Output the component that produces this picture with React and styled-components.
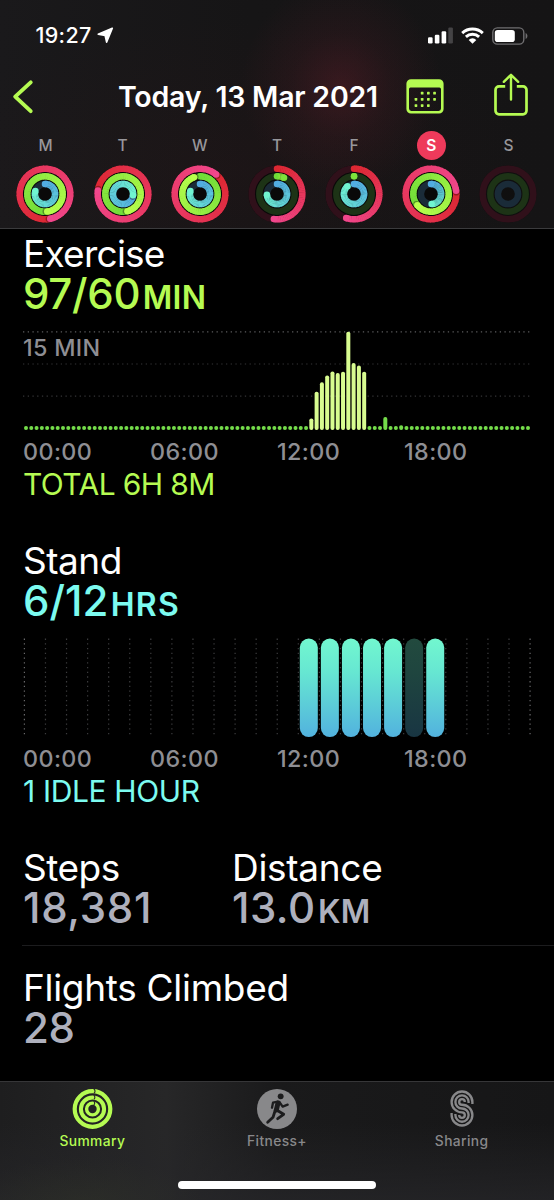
import React from 'react';
import styled, { createGlobalStyle } from 'styled-components';

const GREEN = '#b5fb52';
const CYAN = '#7cfbf0';
const GREY = '#8e8e93';

const GlobalStyle = createGlobalStyle`
  * { box-sizing: border-box; }
  body {
    margin: 0;
    background: #000;
    font-family: Inter, "Liberation Sans", sans-serif;
    color: #fff;
  }
`;

const Screen = styled.div`
  width: 554px;
  height: 1200px;
  display: flex;
  flex-direction: column;
  overflow: hidden;
  background: #000;
`;

const Header = styled.header`
  flex: none;
  height: 229px;
  border-bottom: 1px solid #3b3b3d;
  background:
    radial-gradient(ellipse 100px 105px at 341px 86px, rgba(96, 30, 42, 0.45), rgba(96, 30, 42, 0.17) 50%, transparent),
    radial-gradient(ellipse 300px 150px at 230px 170px, rgba(60, 22, 26, 0.16), transparent),
    linear-gradient(90deg, #1a191b, #161516 45%, #151415);
`;

const StatusBar = styled.div`
  height: 71px;
  padding: 0 26px 0 35.5px;
  display: flex;
  align-items: center;
  svg { flex: none; }
`;

const Clock = styled.span`
  width: 61.5px;
  font-size: 21.5px;
  line-height: 26px;
  margin-top: -1px;
  font-weight: 500;
  letter-spacing: 0.3px;
`;

const StatusIcons = styled.div`
  margin-left: auto;
  display: flex;
  align-items: center;
  gap: 8px;
`;

const NavBar = styled.div`
  height: 51px;
  padding: 0 26px 0 12px;
  display: flex;
  align-items: center;
  svg { flex: none; }
`;

const Title = styled.h1`
  margin: 0 0 0 84px;
  width: 288px;
  white-space: nowrap;
  font-size: 28.5px;
  font-weight: 600;
  letter-spacing: -0.22px;
`;

const NavActions = styled.div`
  flex: 1;
  display: flex;
  align-items: center;
  justify-content: space-between;
`;

const Week = styled.div`
  display: grid;
  grid-template-columns: repeat(7, 77.17px);
  padding: 8.5px 0 0 6.9px;
`;

const Day = styled.div`
  display: flex;
  flex-direction: column;
  align-items: center;
  gap: 5px;
`;

const DayLetter = styled.span`
  width: 29px;
  height: 29px;
  border-radius: 50%;
  text-align: center;
  line-height: 29px;
  font-size: 15.5px;
  font-weight: ${p => (p.$active ? 600 : 500)};
  color: ${p => (p.$active ? '#fff' : '#98979b')};
  background: ${p => (p.$active ? '#ee3a5b' : 'transparent')};
`;

const Main = styled.main`
  flex: 1;
  padding: 4.5px 0 0 23px;
`;

const Section = styled.section`
  height: 307px;
`;

const Name = styled.h2`
  margin: 0;
  white-space: nowrap;
  font-size: 37px;
  line-height: 40px;
  font-weight: 400;
  letter-spacing: ${p => p.$track || '-0.5px'};
`;

const Value = styled.div`
  white-space: nowrap;
  font-size: 42px;
  line-height: 40px;
  font-weight: 500;
  color: ${p => p.$color};
  letter-spacing: ${p => p.$track || '-0.3px'};
`;

const Unit = styled.span`
  margin-left: 2.5px;
  font-size: 32px;
  font-weight: 600;
  letter-spacing: ${p => p.$track || '0.3px'};
`;

const ChartBox = styled.div`
  position: relative;
  height: 100px;
  margin: 13px 0 0 -1px;
  svg { display: block; }
`;

const ScaleLabel = styled.span`
  position: absolute;
  left: 1px;
  top: 4px;
  font-size: 23.3px;
  line-height: 26px;
  font-weight: 500;
  color: ${GREY};
  letter-spacing: 0.3px;
`;

const Axis = styled.div`
  display: grid;
  grid-template-columns: repeat(4, 127px);
  margin-top: 8px;
  font-size: 23.3px;
  line-height: 26px;
  font-weight: 500;
  color: ${GREY};
  letter-spacing: 0.4px;
`;

const Total = styled.div`
  margin-top: 1px;
  white-space: nowrap;
  font-size: 30px;
  line-height: 36px;
  font-weight: 400;
  color: ${p => p.$color};
  letter-spacing: ${p => p.$track};
`;

const Stats = styled.div`
  display: grid;
  grid-template-columns: 209px 1fr;
  height: 98px;
  margin-left: -1px;
  padding-left: 1px;
  border-bottom: 1px solid #1c1c1e;
`;

const Flights = styled.div`
  padding-top: 22.8px;
`;

const TabBar = styled.nav`
  flex: none;
  height: 119px;
  border-top: 1px solid #363638;
  display: flex;
  flex-direction: column;
  align-items: center;
  background:
    radial-gradient(ellipse 120px 50px at 85px 125px, rgba(60, 66, 40, 0.25), transparent),
    linear-gradient(180deg, transparent 35%, rgba(38, 38, 41, 0.75)),
    linear-gradient(90deg, #1e1e1f, #272728 30%, #1a1a1b 50%, #161617);
`;

const Tabs = styled.div`
  width: 100%;
  height: 99px;
  padding-top: 6.5px;
  display: grid;
  grid-template-columns: repeat(3, 1fr);
`;

const Tab = styled.div`
  display: flex;
  flex-direction: column;
  align-items: center;
  gap: 3px;
  color: ${p => (p.$active ? GREEN : '#88888a')};
  font-size: 13.8px;
  line-height: 18px;
  font-weight: 500;
  letter-spacing: 0.4px;
`;

const HomeIndicator = styled.div`
  width: 198px;
  height: 7.5px;
  border-radius: 4px;
  background: #fff;
`;

/* ---------- activity rings ---------- */

const RINGS = [
  { r: 25.3, from: [221, 40, 50], to: [241, 71, 140], track: '#30101a' },
  { r: 17.7, from: [112, 220, 56], to: [184, 255, 76], track: '#1d3316' },
  { r: 10.1, from: [82, 172, 226], to: [112, 245, 208], track: '#1a2b38' },
];

const DAYS = [
  { letter: 'M', v: [1.467, 1.48, 0.8] },
  { letter: 'T', v: [1.772, 1.46, 1.27] },
  { letter: 'W', v: [1.11, 0.945, 0.8] },
  { letter: 'T', v: [0.52, 0.065, 0.74] },
  { letter: 'F', v: [0.55, 0.001, 0.89] },
  { letter: 'S', v: [1.23, 1.64, 0.49], active: true },
  { letter: 'S', v: [0, 0, 0] },
];

const point = (r, turn) => {
  const a = turn * Math.PI * 2;
  return [29 + r * Math.sin(a), 29 - r * Math.cos(a)];
};

const mix = (a, b, t) => `rgb(${a.map((c, i) => Math.round(c + (b[i] - c) * t)).join(',')})`;

function Ring({ ring, value }) {
  const { r, from, to, track } = ring;
  const base = <circle cx="29" cy="29" r={r} fill="none" stroke={track} strokeWidth="6.5" />;
  if (!value) return base;
  const start = value > 1 ? value - 1 : 0;
  const steps = 48;
  const parts = [];
  for (let i = 0; i < steps; i++) {
    const a = start + ((value - start) * i) / steps;
    const b = start + ((value - start) * (i + 1.25)) / steps;
    const [x1, y1] = point(r, a);
    const [x2, y2] = point(r, Math.min(b, value));
    parts.push(
      <path key={i} d={`M${x1} ${y1}A${r} ${r} 0 0 1 ${x2} ${y2}`} stroke={mix(from, to, i / steps)} strokeWidth="6.5" fill="none" />
    );
  }
  const [sx, sy] = point(r, start);
  const [ex, ey] = point(r, value);
  const [hx, hy] = point(r, value + 0.01 * (25 / r));
  return (
    <g>
      {base}
      {value <= 1 && <circle cx={sx} cy={sy} r="3.25" fill={mix(from, to, 0)} />}
      {parts}
      {value > 0.9 && <circle cx={hx} cy={hy} r="3.1" fill="rgba(20,0,0,0.35)" />}
      <circle cx={ex} cy={ey} r="3.25" fill={mix(from, to, value < 0.1 ? 0.2 : 1)} />
    </g>
  );
}

const Rings = ({ values }) => (
  <svg width="58" height="58" viewBox="0 0 58 58">
    <circle cx="29" cy="29" r="28.5" fill="#070707" opacity={values[0] ? 0.85 : 0.4} />
    {RINGS.map((ring, i) => (
      <Ring key={i} ring={ring} value={values[i]} />
    ))}
  </svg>
);

/* ---------- charts ---------- */

// minutes bars: slot of the day (15 min each) -> height
const BARS = {
  54: 11.6, 55: 38.3, 56: 47.7, 57: 54.6, 58: 58.6, 59: 57,
  60: 58.3, 61: 98.3, 62: 67, 63: 64.5, 64: 58.3, 68: 13, 71: 4.8,
};

const ExerciseChart = () => (
  <svg width="532" height="100" viewBox="0 0 532 100">
    {[0.8, 33, 65.2].map((y, i) => (
      <line key={y} x1="1" x2="510" y1={y} y2={y} stroke={i ? '#343436' : '#5c5c5e'} strokeWidth="1.2" strokeDasharray="1.3 3.42" />
    ))}
    {Array.from({ length: 96 }, (_, i) => {
      const h = BARS[i] || 4;
      const tall = i >= 54 && i <= 64;
      return (
        <rect key={i} x={2 + i * 5.284} y={99 - h} width={4} height={h} rx="1.9" fill={tall ? '#d8fc90' : '#74dc4a'} />
      );
    })}
  </svg>
);

const STAND = { 13: 1, 14: 1, 15: 1, 16: 1, 17: 1, 18: 0.3, 19: 1 };

const StandChart = () => (
  <svg width="532" height="100" viewBox="0 0 532 100">
    <defs>
      <linearGradient id="stand" x1="0" y1="0" x2="0" y2="1">
        <stop offset="0" stopColor="#72f7cf" />
        <stop offset="0.35" stopColor="#66e6d2" />
        <stop offset="1" stopColor="#52b2de" />
      </linearGradient>
    </defs>
    {Array.from({ length: 25 }, (_, i) => (
      <line
        key={i}
        x1={2.4 + i * 21.07}
        x2={2.4 + i * 21.07}
        y1="0.6"
        y2="98"
        stroke={i % 24 === 0 ? '#68686a' : '#3c3c3e'}
        strokeWidth="1.2"
        strokeDasharray="1.3 3.42"
      />
    ))}
    {Object.keys(STAND).map(h => (
      <rect key={h} x={3.9 + h * 21.07} y="0.6" width="18" height="98.5" rx="9" fill="url(#stand)" opacity={STAND[h]} />
    ))}
  </svg>
);

const Hours = () => (
  <Axis>
    <span>00:00</span>
    <span>06:00</span>
    <span>12:00</span>
    <span>18:00</span>
  </Axis>
);

/* ---------- icons ---------- */

const LocationIcon = () => (
  <svg width="17" height="17" viewBox="0 0 17 17">
    <path d="M15.3 1.2L1.2 7.3L8.1 8.4L9.6 15.2Z" fill="#fff" stroke="#fff" strokeWidth="1.6" strokeLinejoin="round" />
  </svg>
);

const SignalIcon = () => (
  <svg width="25" height="17" viewBox="0 0 25 17">
    <rect x="0" y="10.3" width="4.6" height="6.2" rx="1.2" fill="#fff" />
    <rect x="6.8" y="7.8" width="4.6" height="8.7" rx="1.2" fill="#fff" />
    <rect x="13.6" y="4.3" width="4.6" height="12.2" rx="1.2" fill="#fff" />
    <rect x="20.3" y="0.6" width="4.6" height="15.9" rx="1.2" fill="#444345" />
  </svg>
);

const WifiIcon = () => (
  <svg width="23" height="17" viewBox="0 0 23 17">
    <g fill="none" stroke="#fff" strokeWidth="2.9">
      <path d="M1.2 6.1A15 15 0 0 1 21.8 6.1" />
      <path d="M4.9 9.9A9.6 9.6 0 0 1 18.1 9.9" />
    </g>
    <path d="M7.7 12.9A5.4 5.4 0 0 1 15.3 12.9L11.5 16.8Z" fill="#fff" />
  </svg>
);

const BatteryIcon = () => (
  <svg width="36" height="18" viewBox="0 0 36 18">
    <rect x="0.8" y="0.9" width="31" height="16.2" rx="4.6" fill="none" stroke="#6f6e70" strokeWidth="1.4" />
    <rect x="2.8" y="2.9" width="20" height="12.2" rx="2.8" fill="#fff" />
    <path d="M33.6 6V12C34.8 11.5 35.4 10.4 35.4 9C35.4 7.6 34.8 6.5 33.6 6Z" fill="#6f6e70" />
  </svg>
);

const BackIcon = () => (
  <svg width="22" height="36" viewBox="0 0 22 36">
    <path d="M18.7 3.4L3.2 17.6L18.7 32.2" fill="none" stroke={GREEN} strokeWidth="3.9" strokeLinecap="round" strokeLinejoin="round" />
  </svg>
);

const CalendarIcon = () => {
  const dots = [[1, 0], [2, 0], [3, 0], [0, 1], [1, 1], [2, 1], [3, 1], [0, 2], [1, 2], [2, 2]];
  return (
    <svg width="38" height="35" viewBox="0 0 38 35">
      <path d="M5 0.2H33A4.6 4.6 0 0 1 37.6 4.8V30A4.6 4.6 0 0 1 33 34.6H5A4.6 4.6 0 0 1 0.4 30V4.8A4.6 4.6 0 0 1 5 0.2ZM4.8 8.6A1.6 1.6 0 0 0 3 10.2V29.6A2.4 2.4 0 0 0 5.4 32H32.6A2.4 2.4 0 0 0 35 29.6V10.2A1.6 1.6 0 0 0 33.4 8.6Z" fill={GREEN} fillRule="evenodd" />
      {dots.map(([c, r]) => (
        <rect key={`${c}${r}`} x={8.6 + c * 6.2} y={12.8 + r * 6.2} width="2.7" height="2.7" rx="0.6" fill={GREEN} />
      ))}
    </svg>
  );
};

const ShareSvg = styled.svg`
  margin-bottom: 4px;
`;

const ShareIcon = () => (
  <ShareSvg width="34" height="43" viewBox="0 0 34 43">
    <g fill="none" stroke={GREEN} strokeWidth="2.7" strokeLinecap="round" strokeLinejoin="round">
      <path d="M11.2 13.4H5A3.5 3.5 0 0 0 1.5 16.9V37.8A3.5 3.5 0 0 0 5 41.3H29A3.5 3.5 0 0 0 32.5 37.8V16.9A3.5 3.5 0 0 0 29 13.4H22.8" strokeLinecap="butt" />
      <path d="M17 26.6V2.4M9.8 8.8L17 1.8L24.2 8.8" strokeWidth="2.4" />
    </g>
  </ShareSvg>
);

const SummaryIcon = () => (
  <svg width="41" height="40" viewBox="0 0 41 40">
    <g fill="none" stroke="currentColor">
      <circle cx="20.5" cy="20" r="17.8" strokeWidth="4.2" />
      <circle cx="20.5" cy="20" r="11.6" strokeWidth="4" />
      <circle cx="20.5" cy="20" r="5.9" strokeWidth="3.4" />
    </g>
    <g fill="none" stroke="#262627" strokeWidth="1.1">
      <path d="M21.8 0A2.6 2.6 0 0 1 21.8 4.4M21.8 6.2A2.6 2.6 0 0 1 21.8 10.4M21.8 12.2A2.4 2.4 0 0 1 21.8 16" />
    </g>
  </svg>
);

const RunnerIcon = () => (
  <svg width="40" height="40" viewBox="80 27 120 120">
    <circle cx="140" cy="87" r="60" fill="currentColor" />
    <circle cx="151" cy="49" r="8.8" fill="#1c1c1d" />
    <g fill="none" stroke="#1c1c1d" strokeLinecap="round" strokeLinejoin="round">
      <path d="M143 69L138 90" strokeWidth="15" />
      <path d="M142 65L128 68L125 83M147 66L157 80L172 74" strokeWidth="7" />
      <path d="M140 91L160 103L142 116M135 90L128 112L112 127" strokeWidth="8.5" />
    </g>
  </svg>
);

// three parallel stripes: upper radius, lower radius, length of the end at each side
const STRIPES = [[10.4, 2.8, 2, 0], [6.6, 6.6, 1, 1], [2.8, 10.4, 0, 2]];

const SharingIcon = () => (
  <svg width="24" height="40" viewBox="0 0 24 40">
    <g fill="none" stroke="currentColor" strokeWidth="2.35">
      {STRIPES.map(([a, b, top, bottom]) => (
        <path key={a} d={`M${12 + a} ${12.9 + top}V12.9A${a} ${a} 0 1 0 12 ${12.9 + a}A${b} ${b} 0 1 1 ${12 - b} 26.1V${26.1 - bottom}`} />
      ))}
    </g>
  </svg>
);

export default function App() {
  return (
    <Screen>
      <GlobalStyle />
      <Header>
        <StatusBar>
          <Clock>19:27</Clock>
          <LocationIcon />
          <StatusIcons>
            <SignalIcon />
            <WifiIcon />
            <BatteryIcon />
          </StatusIcons>
        </StatusBar>
        <NavBar>
          <BackIcon />
          <Title>Today, 13 Mar 2021</Title>
          <NavActions>
            <CalendarIcon />
            <ShareIcon />
          </NavActions>
        </NavBar>
        <Week>
          {DAYS.map((d, i) => (
            <Day key={i}>
              <DayLetter $active={d.active}>{d.letter}</DayLetter>
              <Rings values={d.v} />
            </Day>
          ))}
        </Week>
      </Header>

      <Main>
        <Section>
          <Name $track="-0.75px">Exercise</Name>
          <Value $color={GREEN}>97/60<Unit>MIN</Unit></Value>
          <ChartBox>
            <ExerciseChart />
            <ScaleLabel>15 MIN</ScaleLabel>
          </ChartBox>
          <Hours />
          <Total $color={GREEN} $track="-0.6px">TOTAL 6H 8M</Total>
        </Section>

        <Section>
          <Name>Stand</Name>
          <Value $color={CYAN} $track="0px">6/12<Unit $track="1.2px">HRS</Unit></Value>
          <ChartBox>
            <StandChart />
          </ChartBox>
          <Hours />
          <Total $color={CYAN} $track="-0.35px">1 IDLE HOUR</Total>
        </Section>

        <Stats>
          <div>
            <Name>Steps</Name>
            <Value $color="#aeb0bd" $track="0.7px">18,381</Value>
          </div>
          <div>
            <Name $track="-0.3px">Distance</Name>
            <Value $color="#aeb0bd" $track="0.5px">13.0<Unit>KM</Unit></Value>
          </div>
        </Stats>
        <Flights>
          <Name $track="-0.3px">Flights Climbed</Name>
          <Value $color="#aeb0bd">28</Value>
        </Flights>
      </Main>

      <TabBar>
        <Tabs>
          <Tab $active>
            <SummaryIcon />
            Summary
          </Tab>
          <Tab>
            <RunnerIcon />
            Fitness+
          </Tab>
          <Tab>
            <SharingIcon />
            Sharing
          </Tab>
        </Tabs>
        <HomeIndicator />
      </TabBar>
    </Screen>
  );
}
